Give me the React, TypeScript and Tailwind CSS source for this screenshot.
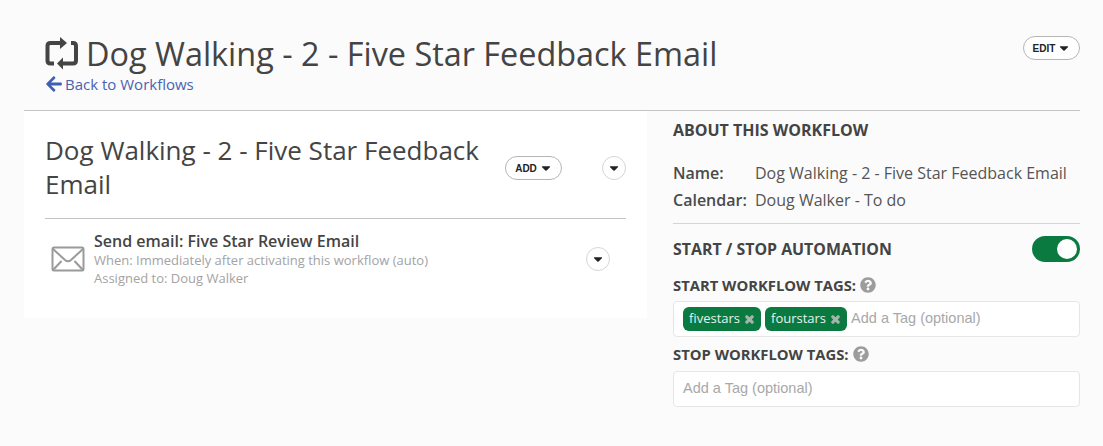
import React from 'react';
import { FaArrowLeft, FaCaretDown, FaQuestionCircle, FaTimes } from 'react-icons/fa';

const font = "font-['Open_Sans',sans-serif]";

function PillButton({ label }: { label: string }) {
  return (
    <button className="flex h-6 w-[57px] items-center justify-center gap-[2px] rounded-full border border-[#b5b5b5] bg-white pl-px font-['Liberation_Sans',sans-serif] text-[10px] font-bold text-[#222]">
      {label}
      <FaCaretDown className="h-3.5 w-3.5" />
    </button>
  );
}

function RoundCaret() {
  return (
    <button className="flex h-6 w-6 items-center justify-center rounded-full border border-[#d5d5d5] bg-white text-[#222]">
      <FaCaretDown className="h-3.5 w-3.5" />
    </button>
  );
}

function RepeatIcon() {
  return (
    <svg width="35" height="36" viewBox="5 3 35 36" fill="#444">
      <path d="M14 31.5 H10.5 Q7.5 31.5 7.5 28.5 V14 Q7.5 11 10.5 11 H21" fill="none" stroke="#444" strokeWidth="4" />
      <path d="M27 11 L20 5 V17 Z" />
      <path d="M31 11 H33 Q36 11 36 14 V28.5 Q36 31.5 33 31.5 H23" fill="none" stroke="#444" strokeWidth="4" />
      <path d="M17 31.5 L23 25.5 V37.5 Z" />
    </svg>
  );
}

function EnvelopeIcon() {
  return (
    <svg width="34" height="26" viewBox="0 0 34 26" fill="none" stroke="#9a9a9a" strokeWidth="2" strokeLinejoin="round" strokeLinecap="round">
      <rect x="1.5" y="1.5" width="31" height="23" rx="1.5" />
      <path d="M2 3 L14 14 Q17 16.5 20 14 L32 3" />
      <path d="M3 23 L10 15.5 M31 23 L24 15.5" />
    </svg>
  );
}

function Tag({ label }: { label: string }) {
  return (
    <span className="flex h-6 items-center gap-1 rounded-md bg-[#0b7a41] px-1.5 text-[13px] text-[#e8f3ec]">
      {label}
      <FaTimes className="h-[11px] w-[11px] text-[#a3b8ab]" stroke="currentColor" strokeWidth="50" />
    </span>
  );
}

function HelpLabel({ label }: { label: string }) {
  return (
    <div className="flex items-center gap-1 text-[14.8px] font-bold leading-5 text-[#444]">
      {label}
      <FaQuestionCircle className="h-4 w-4 text-[#9c9c9c]" />
    </div>
  );
}

export default function App() {
  return (
    <div className={`${font} h-[446px] w-[1103px] overflow-hidden bg-[#fbfbfb] pl-6 pr-[23px] pt-[33px]`}>
      {/* Header */}
      <div className="flex justify-between border-b border-[#c4c4c4] pb-[14px] pl-[21px]">
        <div>
          <h1 className="flex h-10 items-center gap-[6px] text-[32.4px] leading-10 text-[#444]">
            <RepeatIcon />
            Dog Walking - 2 - Five Star Feedback Email
          </h1>
          <a className="-mt-px flex items-center gap-[2px] text-[15px] leading-6 text-[#4a63b0]">
            <FaArrowLeft className="h-[18px] w-[18px] text-[#3f5fb5]" />
            Back to Workflows
          </a>
        </div>
        <div className="pt-[3px]">
          <PillButton label="EDIT" />
        </div>
      </div>

      <div className="flex">
        {/* Workflow card */}
        <div className="h-[207px] w-[623px] bg-white px-[21px]">
          <div className="flex h-[108px] items-start border-b border-[#c4c4c4]">
            <h2 className="w-[460px] pt-[22px] text-[26px] leading-[34px] text-[#444]">Dog Walking - 2 - Five Star Feedback Email</h2>
            <div className="pt-[45px]">
              <PillButton label="ADD" />
            </div>
            <div className="ml-auto pt-[45px]">
              <RoundCaret />
            </div>
          </div>
          <div className="flex items-center pt-3">
            <div className="ml-1.5 mr-[9px]">
              <EnvelopeIcon />
            </div>
            <div className="flex-1">
              <p className="text-base font-semibold leading-5 text-[#444]">Send email: Five Star Review Email</p>
              <p className="text-[13px] leading-[18px] text-[#a3a3a3]">When: Immediately after activating this workflow (auto)</p>
              <p className="text-[13px] leading-[18px] text-[#a3a3a3]">Assigned to: Doug Walker</p>
            </div>
            <div className="mr-4">
              <RoundCaret />
            </div>
          </div>
        </div>

        {/* About panel */}
        <div className="ml-[26px] flex-1">
          <h3 className="pt-[7px] text-base font-bold leading-6 text-[#444]">ABOUT THIS WORKFLOW</h3>
          <div className="mt-[19px] grid grid-cols-[82px_1fr] gap-y-[3px] text-base leading-6 text-[#555]">
            <span className="font-semibold text-[#4a4a4a]">Name:</span>
            <span>Dog Walking - 2 - Five Star Feedback Email</span>
            <span className="font-semibold text-[#4a4a4a]">Calendar:</span>
            <span>Doug Walker - To do</span>
          </div>
          <div className="mt-[11px] flex items-center justify-between border-t border-[#d5d5d5] pt-[12px]">
            <span className="text-[15.9px] font-bold leading-6 text-[#444]">START / STOP AUTOMATION</span>
            <span className="flex h-[26px] w-[48px] items-center justify-end rounded-full bg-[#0b7a41] pr-[3px]">
              <span className="h-5 w-5 rounded-full bg-white" />
            </span>
          </div>
          <div className="mt-[13px]">
            <HelpLabel label="START WORKFLOW TAGS:" />
          </div>
          <div className="mt-[6px] flex h-9 items-center gap-1 rounded border border-[#e6e6e6] bg-white pl-[9px] font-['Liberation_Sans',sans-serif]">
            <div className={`${font} flex gap-1`}>
              <Tag label="fivestars" />
              <Tag label="fourstars" />
            </div>
            <span className="text-[14.5px] text-[#a8a8a8]">Add a Tag (optional)</span>
          </div>
          <div className="mt-[7px]">
            <HelpLabel label="STOP WORKFLOW TAGS:" />
          </div>
          <div className="mt-[7px] flex h-9 items-center rounded border border-[#e6e6e6] bg-white pl-[9px] font-['Liberation_Sans',sans-serif] text-[14.5px] text-[#a8a8a8]">
            Add a Tag (optional)
          </div>
        </div>
      </div>
    </div>
  );
}
